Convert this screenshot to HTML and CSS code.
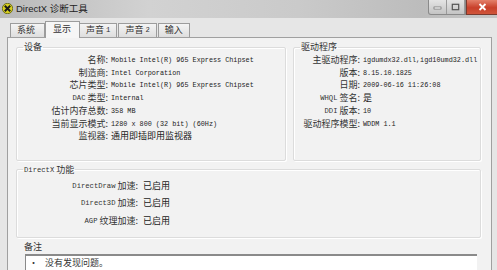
FILE: index.html
```html
<!DOCTYPE html>
<html lang="zh-CN">
<head>
  <meta charset="UTF-8">
  <title>DirectX 诊断工具</title>
  <link rel="stylesheet" href="styles.css">
</head>
<body>
  <div class="window">
    <div class="titlebar">
      <svg class="app-icon" width="11" height="11" viewBox="0 0 11 11">
        <circle cx="5.5" cy="5.5" r="5.2" fill="#d8d020" stroke="#5a5a10" stroke-width="0.8"/>
        <path d="M2.8 2.8 L8.2 8.2 M8.2 2.8 L2.8 8.2" stroke="#1a1a1a" stroke-width="2"/>
      </svg>
      <span class="title">DirectX 诊断工具</span>
      <div class="caption-buttons">
        <div class="cap-group">
          <span class="cap-btn"><svg width="9" height="6" viewBox="0 0 9 6"><rect x="1" y="3" width="7" height="2" fill="#fff" stroke="#555" stroke-width="0.6"/></svg></span>
          <span class="cap-btn"><svg width="9" height="8" viewBox="0 0 9 8"><rect x="1.3" y="1.3" width="6.4" height="5.4" fill="none" stroke="#555" stroke-width="1.2"/></svg></span>
        </div>
        <span class="cap-close"><svg width="9" height="8" viewBox="0 0 9 8"><path d="M1.5 1 L7.5 7 M7.5 1 L1.5 7" stroke="#fff" stroke-width="1.8"/></svg></span>
      </div>
    </div>

    <div class="client">
      <div class="tabs">
        <span class="tab">系统</span>
        <span class="tab active">显示</span>
        <span class="tab">声音 <span class="lat">1</span></span>
        <span class="tab">声音 <span class="lat">2</span></span>
        <span class="tab">输入</span>
      </div>

      <div class="panel">
        <div class="top-groups">
          <fieldset class="group device">
            <legend>设备</legend>
            <div class="rows">
              <span class="lbl">名称:</span><span class="val">Mobile Intel(R) 965 Express Chipset</span>
              <span class="lbl">制造商:</span><span class="val">Intel Corporation</span>
              <span class="lbl">芯片类型:</span><span class="val">Mobile Intel(R) 965 Express Chipset</span>
              <span class="lbl"><span class="lat">DAC</span> 类型:</span><span class="val">Internal</span>
              <span class="lbl">估计内存总数:</span><span class="val">358 MB</span>
              <span class="lbl">当前显示模式:</span><span class="val">1280 x 800 (32 bit) (60Hz)</span>
              <span class="lbl">监视器:</span><span class="val cjk">通用即插即用监视器</span>
            </div>
          </fieldset>
          <fieldset class="group driver">
            <legend>驱动程序</legend>
            <div class="rows">
              <span class="lbl">主驱动程序:</span><span class="val">igdumdx32.dll,igd10umd32.dll</span>
              <span class="lbl">版本:</span><span class="val">8.15.10.1825</span>
              <span class="lbl">日期:</span><span class="val">2009-06-16 11:26:08</span>
              <span class="lbl"><span class="lat">WHQL</span> 签名:</span><span class="val cjk">是</span>
              <span class="lbl"><span class="lat">DDI</span> 版本:</span><span class="val">10</span>
              <span class="lbl">驱动程序模型:</span><span class="val">WDDM 1.1</span>
            </div>
          </fieldset>
        </div>

        <fieldset class="group features">
          <legend><span class="lat">DirectX</span> 功能</legend>
          <div class="rows">
            <span class="lbl"><span class="lat">DirectDraw</span> 加速:</span><span class="val cjk">已启用</span>
            <span class="lbl"><span class="lat">Direct3D</span> 加速:</span><span class="val cjk">已启用</span>
            <span class="lbl"><span class="lat">AGP</span> 纹理加速:</span><span class="val cjk">已启用</span>
          </div>
        </fieldset>

        <div class="notes-label">备注</div>
        <div class="notes">
          <span class="bullet">•</span>
          <span class="note-text">没有发现问题。</span>
        </div>
      </div>
    </div>
  </div>
</body>
</html>
```

FILE: styles.css
```css
body {
  margin: 0;
  background: #e9e9e9;
  font-family: "Noto Sans CJK SC", "Liberation Sans", sans-serif;
  color: #333;
}
.window {
  width: 497px;
  height: 270px;
  overflow: hidden;
  background: #e6e6e6;
}
.titlebar {
  height: 18px;
  display: flex;
  align-items: center;
  background: linear-gradient(90deg, #b9b9b9 0%, #d2d2d2 30%, #cacaca 60%, #bcbcbc 85%, #c6c6c6 100%);
}
.app-icon {
  margin-left: 2px;
  margin-top: -2px;
}
.title {
  margin-left: 3px;
  margin-top: -2px;
  font-family: "Liberation Sans", "Noto Sans CJK SC", sans-serif;
  font-size: 9.5px;
  color: #222;
}
.caption-buttons {
  margin-left: auto;
  align-self: flex-start;
  display: flex;
  height: 15px;
}
.cap-group {
  display: flex;
  border: 1px solid #8a8a8a;
  border-top: none;
  border-radius: 0 0 0 3px;
  background: linear-gradient(#e4e4e4, #c4c4c4);
}
.cap-btn {
  width: 17px;
  display: flex;
  align-items: center;
  justify-content: center;
  border-right: 1px solid #9a9a9a;
}
.cap-close {
  width: 30px;
  display: flex;
  align-items: center;
  justify-content: center;
  background: linear-gradient(#e3806a, #c8402a 55%, #d0553a);
  border: 1px solid #7a3a2e;
  border-top: none;
  border-right: none;
}
.client {
  padding: 4px 5px 0 7px;
}
.lat {
  font-family: "Liberation Mono", monospace;
  font-size: 7.2px;
  line-height: 0;
  vertical-align: 1px;
}
.tabs {
  display: flex;
  align-items: flex-end;
  height: 15px;
  padding-left: 3px;
  font-size: 9px;
}
.tab {
  height: 13px;
  line-height: 12px;
  padding: 0 6px;
  margin-right: 1px;
  border: 1px solid #9c9c9c;
  border-bottom: none;
  background: linear-gradient(#f4f4f4, #dedede);
  color: #333;
}
.tab:first-child {
  width: 21px;
}
.tab.active {
  height: 16px;
  line-height: 14px;
  margin: 0 -1px -1px -1px;
  padding: 0 8px 0 7px;
  background: #f6f6f6;
  position: relative;
  z-index: 1;
}
.panel {
  height: 240px;
  border: 1px solid #a0a0a0;
  background: #f2f2f2;
  padding: 4px 8px 0 8px;
}
.top-groups {
  display: flex;
  gap: 7px;
}
.group {
  margin: 0;
  padding: 2px 0 17px 0;
  border: 1px solid #dcdcdc;
  border-radius: 2px;
  box-shadow: inset 1px 1px 0 #fff, 1px 1px 0 #fff;
}
.group legend {
  margin-left: 6px;
  padding: 0 1px;
  font-size: 9px;
  line-height: 10px;
  color: #333;
}
.device {
  width: 268px;
}
.driver {
  flex: 1;
  margin-right: 2px;
}
.rows {
  display: grid;
  grid-template-columns: 91px 1fr;
  column-gap: 3px;
  line-height: 12.7px;
}
.driver .rows {
  grid-template-columns: 66px 1fr;
}
.lbl {
  text-align: right;
  font-size: 9px;
  white-space: nowrap;
}
.val {
  font-family: "Liberation Mono", monospace;
  font-size: 6.8px;
  white-space: nowrap;
  color: #222;
}
.val.cjk {
  font-family: "Noto Sans CJK SC", sans-serif;
  font-size: 9px;
}
.features {
  margin-top: 4px;
  margin-right: 2px;
  padding: 2px 0 8px 0;
}
.features .rows {
  grid-template-columns: 121px 1fr;
  column-gap: 5px;
  line-height: 17.5px;
}
.notes-label {
  margin: 4px 0 0 8px;
  font-size: 9px;
  line-height: 10px;
}
.notes {
  margin: 2px 6px 0 9px;
  height: 20px;
  display: flex;
  align-items: flex-start;
  background: #fff;
  border-top: 2px solid #8a8a8a;
  border-left: 1px solid #8a8a8a;
  font-size: 9px;
  line-height: 14px;
}
.bullet {
  margin-left: 3px;
  width: 16px;
}
.note-text {
  color: #333;
}
```
